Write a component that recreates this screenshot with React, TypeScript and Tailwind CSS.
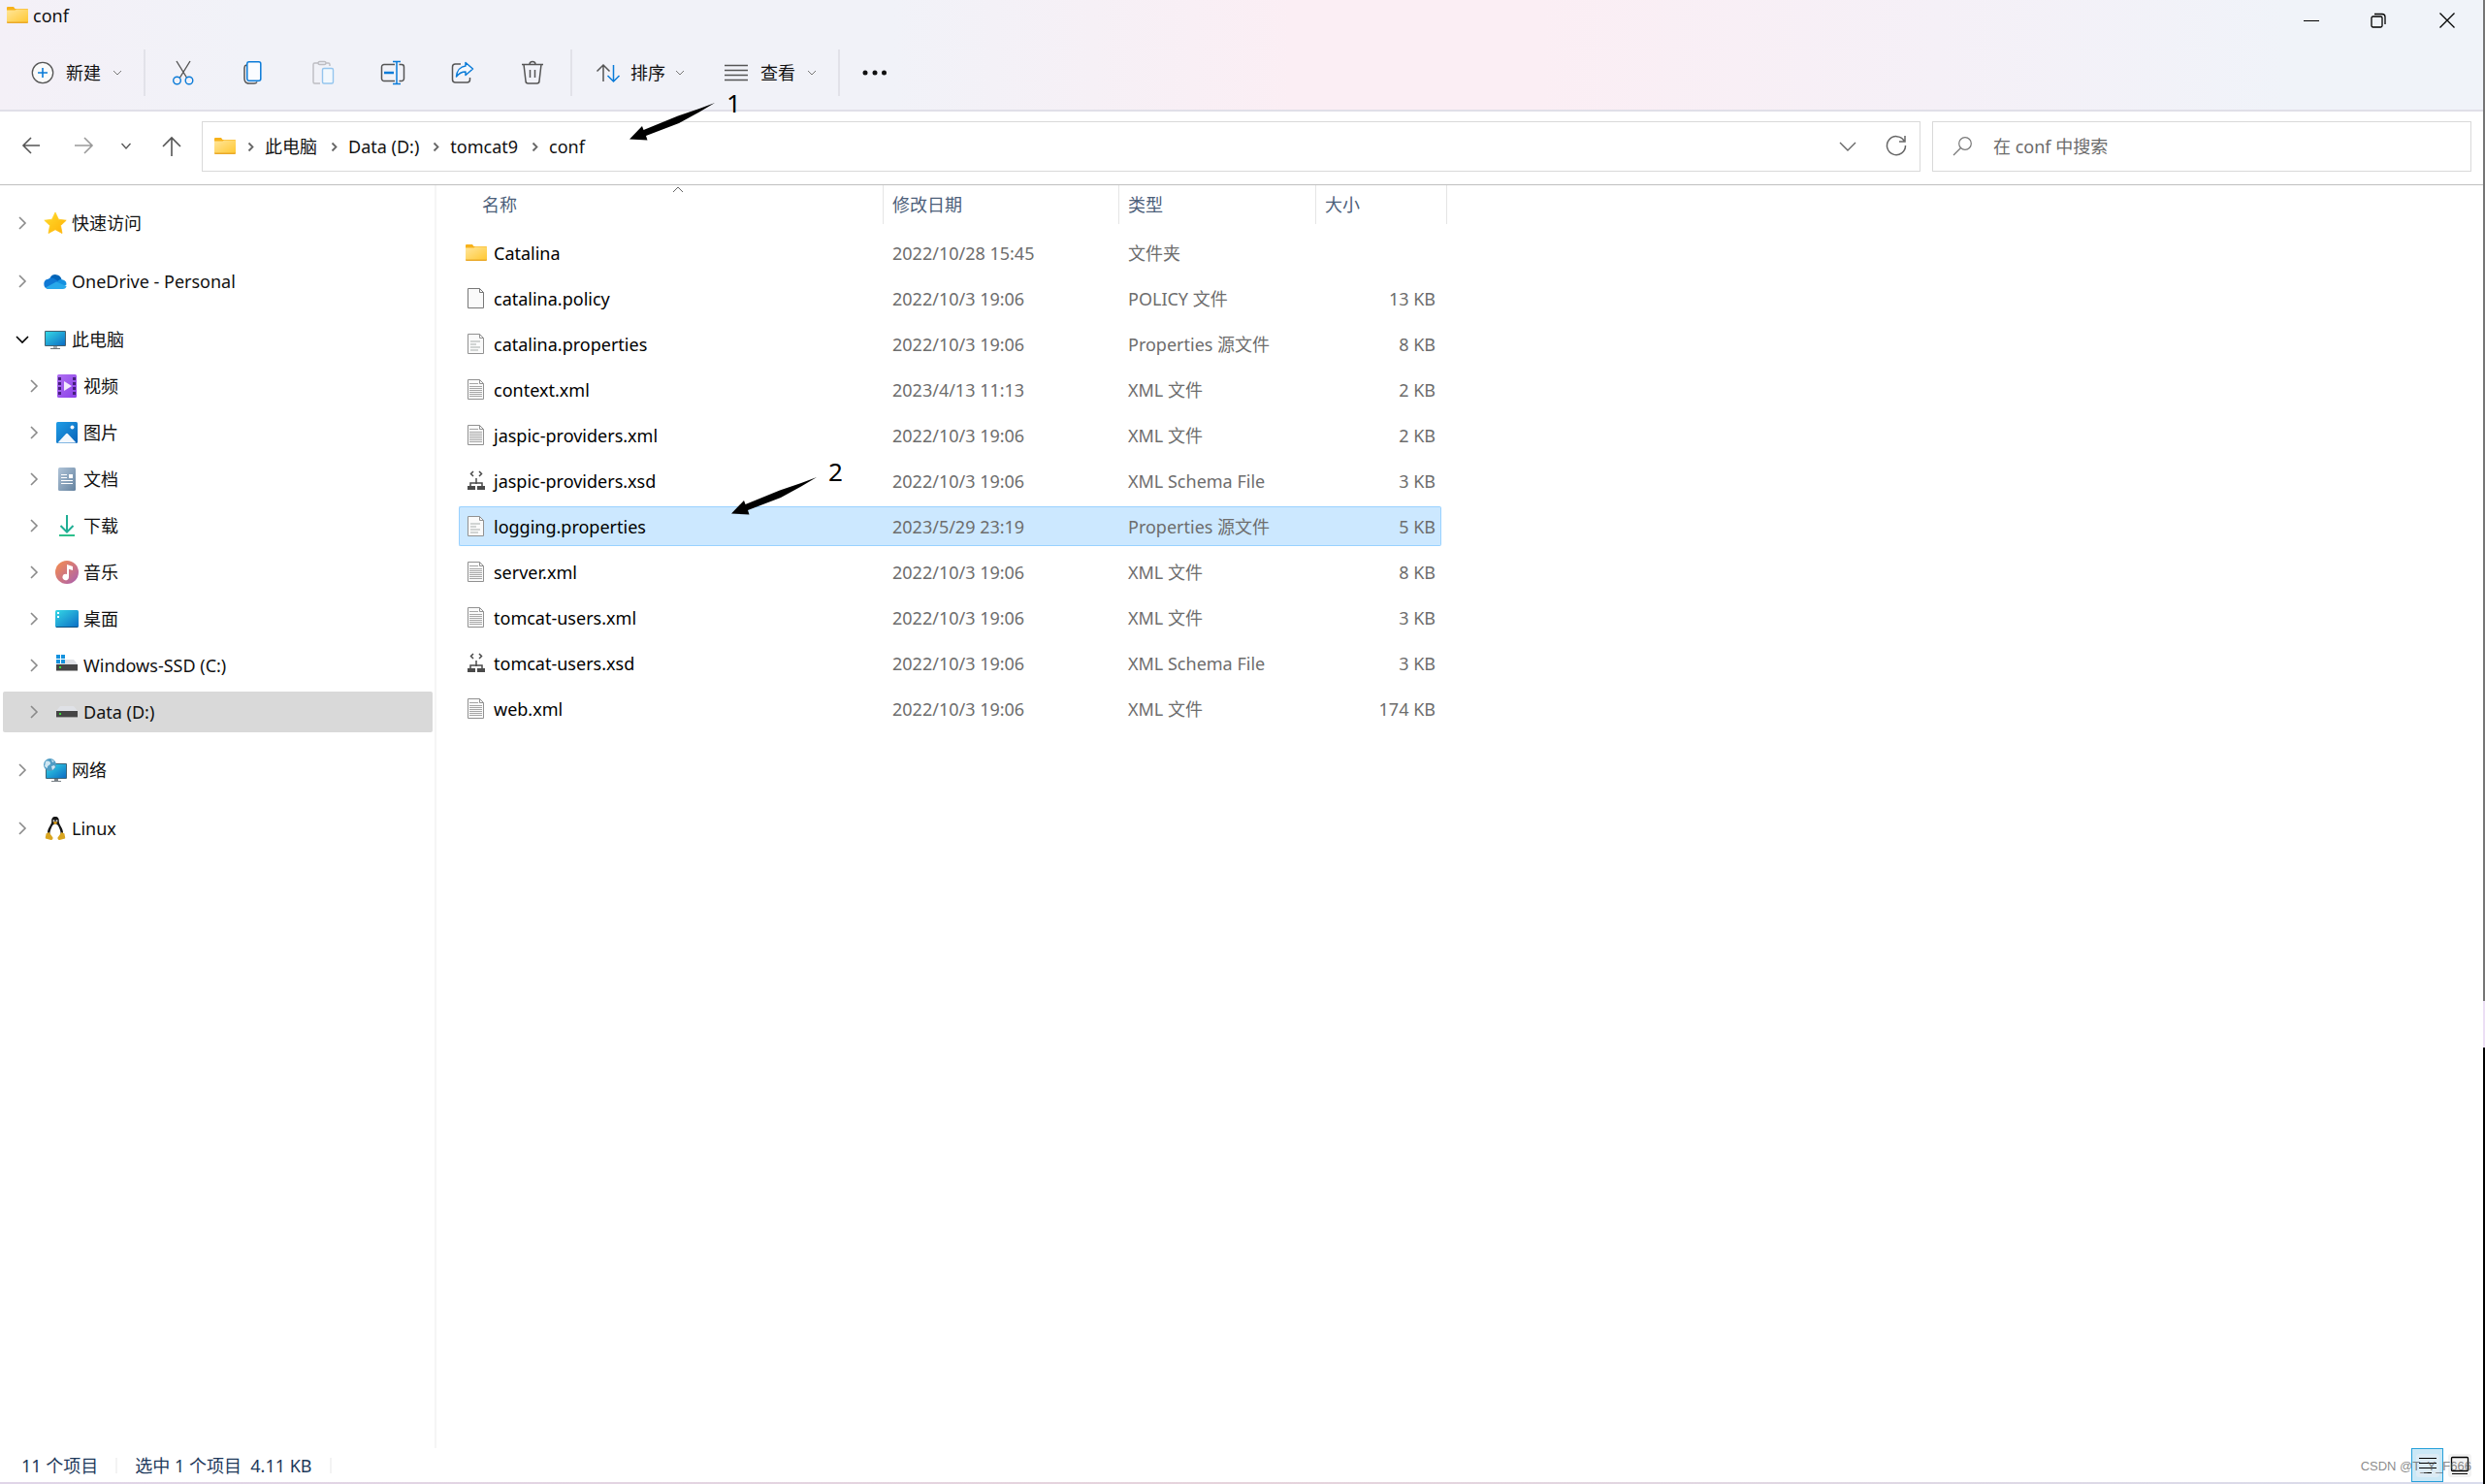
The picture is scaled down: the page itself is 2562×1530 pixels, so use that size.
import { useState } from 'react';
import type { ReactNode } from 'react';

type IconProps = { className?: string };

function Folder({ className = '' }: IconProps) {
  return (
    <svg width="24" height="24" viewBox="0 0 24 24" className={`shrink-0 ${className}`}>
      <defs>
        <linearGradient id="folder" x1="0" y1="0" x2="1" y2="1">
          <stop offset="0" stopColor="#ffe69c" />
          <stop offset="1" stopColor="#ffc832" />
        </linearGradient>
      </defs>
      <path d="M1 4a1 1 0 0 1 1-1h6l1.500 2H22a1 1 0 0 1 1 1v3H1z" fill="#f7b21b" />
      <path d="M1 6.500h8.500L11 5.500h12V19H1z" fill="url(#folder)" />
      <path d="M1 18.500h22v.6a.9.9 0 0 1-.9.9H1.900a.9.9 0 0 1-.9-.9z" fill="#eaa92a" />
    </svg>
  );
}

function Chevron({ className = '' }: IconProps) {
  return (
    <svg width="24" height="24" viewBox="0 0 24 24" fill="none" stroke="currentColor" strokeWidth="1.600" className={`shrink-0 ${className}`}>
      <path d="M9 6l6 6-6 6" />
    </svg>
  );
}

function SmallDown() {
  return (
    <svg width="10" height="10" viewBox="0 0 10 10" fill="none" stroke="#777" strokeWidth="1">
      <path d="M1 3l4 4 4-4" />
    </svg>
  );
}

function CrumbArrow() {
  return (
    <svg width="8" height="12" viewBox="0 0 8 12" fill="none" stroke="#666" strokeWidth="1.800" className="shrink-0">
      <path d="M1.500 2.500l4 4-4 4" />
    </svg>
  );
}

const StarIcon = () => (
  <svg width="24" height="24" viewBox="0 0 24 24">
    <defs>
      <linearGradient id="star" x1="0" y1="0" x2="1" y2="1">
        <stop offset="0" stopColor="#ffdc2e" />
        <stop offset="1" stopColor="#ffb106" />
      </linearGradient>
    </defs>
    <path d="M12 1l3.400 7.200 7.800 1-5.700 5.400 1.500 7.900L12 18.700l-7 3.800 1.500-7.900L.8 9.200l7.800-1z" fill="url(#star)" stroke="url(#star)" strokeLinejoin="round" strokeWidth=".8" />
  </svg>
);

const CloudIcon = () => (
  <svg width="24" height="24" viewBox="0 0 24 24">
    <path d="M6.500 8.500A6.500 6.500 0 0 1 18.500 10l-5 4z" fill="#0364b8" />
    <path d="M5 20a5.200 5.200 0 0 1-.4-10.300A6 6 0 0 1 10.500 9l5.500 3.500L6 20z" fill="#0f78d4" />
    <path d="M11.500 14.500l4.600-4a4.500 4.500 0 0 1 3.900 0 5 5 0 0 1 3.500 5l-4 2z" fill="#1490df" />
    <path d="M2 18.500l11-6 10.600 4.500A4 4 0 0 1 19.500 20H5a5 5 0 0 1-3-1.500z" fill="#28a8ea" />
  </svg>
);

const PcIcon = () => (
  <svg width="24" height="24" viewBox="0 0 24 24">
    <defs>
      <linearGradient id="screen" x1="0" y1="0" x2="1" y2="1">
        <stop offset="0" stopColor="#35d8e6" />
        <stop offset="1" stopColor="#0b6cc4" />
      </linearGradient>
    </defs>
    <rect x="1" y="3" width="22" height="16" rx="1" fill="#46606e" />
    <rect x="2" y="4" width="20" height="14" fill="url(#screen)" />
    <path d="M10 19h4v2h-4z" fill="#a5abb0" />
    <path d="M7 21h10v1H7z" fill="#6c7276" />
  </svg>
);

const VideoIcon = () => (
  <svg width="24" height="24" viewBox="0 0 24 24">
    <defs>
      <linearGradient id="video" x1="0" y1="0" x2="1" y2="1">
        <stop offset="0" stopColor="#b070f2" />
        <stop offset="1" stopColor="#8a3fe8" />
      </linearGradient>
    </defs>
    <rect x="2" y="0" width="20" height="24" rx="1.500" fill="url(#video)" />
    <path d="M3 3h3v3H3zM3 8h3v3H3zM3 13h3v3H3zM3 18h3v3H3zM18 3h3v3h-3zM18 8h3v3h-3zM18 13h3v3h-3zM18 18h3v3h-3z" fill="#46207c" />
    <path d="M9 7l8 5-8 5z" fill="#f2eafc" />
  </svg>
);

const PictureIcon = () => (
  <svg width="24" height="24" viewBox="0 0 24 24">
    <defs>
      <linearGradient id="picture" x1="0" y1="0" x2="1" y2="1">
        <stop offset="0" stopColor="#1f9de6" />
        <stop offset="1" stopColor="#0963b8" />
      </linearGradient>
    </defs>
    <rect x="1" y="1" width="22" height="22" rx="1.500" fill="url(#picture)" />
    <path d="M2.500 22.500l8.300-9a1.600 1.600 0 0 1 2.400 0l8.300 9z" fill="#f3f8fd" />
    <circle cx="17.500" cy="6.500" r="2" fill="#f3f8fd" />
  </svg>
);

const DocIcon = () => (
  <svg width="24" height="24" viewBox="0 0 24 24">
    <defs>
      <linearGradient id="doc" x1="0" y1="0" x2="1" y2="1">
        <stop offset="0" stopColor="#b0c4d8" />
        <stop offset="1" stopColor="#64829f" />
      </linearGradient>
    </defs>
    <rect x="3" y="0" width="18" height="24" rx="1.500" fill="url(#doc)" />
    <path d="M6 7.500h6M6 10.500h6M6 13.500h12M6 16.500h12" stroke="#fff" strokeWidth="1.200" />
    <path d="M14 7h4v4h-4z" fill="#fff" />
  </svg>
);

const DownloadIcon = () => (
  <svg width="24" height="24" viewBox="0 0 24 24" fill="none" strokeWidth="2">
    <path d="M12 1v17M5.500 12l6.500 6.500 6.500-6.500" stroke="#1fae94" />
    <path d="M4 22h16" stroke="#2cc08c" />
  </svg>
);

const MusicIcon = () => (
  <svg width="24" height="24" viewBox="0 0 24 24">
    <defs>
      <linearGradient id="music" x1="0" y1="0" x2="1" y2="1">
        <stop offset="0.100" stopColor="#f08a55" />
        <stop offset="0.900" stopColor="#b063a8" />
      </linearGradient>
    </defs>
    <circle cx="12" cy="12" r="12" fill="url(#music)" />
    <path d="M12 4l6 2v4l-4-1.200V17a3.300 3.300 0 1 1-2-3z" fill="#fff" />
  </svg>
);

const DesktopIcon = () => (
  <svg width="24" height="24" viewBox="0 0 24 24">
    <rect x="0" y="3" width="24" height="18" rx="1.500" fill="url(#screen)" />
    <path d="M1 20h22v1H1z" fill="#0d4f80" />
    <path d="M2 5h2v2H2zM2 9h2v2H2z" fill="#fff" />
  </svg>
);

const DriveIcon = ({ windows = false }: { windows?: boolean }) => (
  <svg width="24" height="24" viewBox="0 0 24 24">
    <path d="M5 6h14l4 5H1z" fill="#dfe1e6" />
    <rect x="1" y="11" width="22" height="7" fill="#454545" />
    <path d="M1 17h22v1H1z" fill="#a0a0a0" />
    <path d="M4 13h2v2H4z" fill="#3adb3a" />
    {windows && (
      <>
        <path d="M1 1h9v9H1z" fill="#fff" />
        <path d="M1 1h4v4H1zM6 1h4v4H6zM1 6h4v4H1zM6 6h4v4H6z" fill="#1492de" />
      </>
    )}
  </svg>
);

const NetworkIcon = () => (
  <svg width="24" height="24" viewBox="0 0 24 24">
    <rect x="2" y="5" width="22" height="16" rx="1" fill="#3b6478" />
    <rect x="3" y="6" width="20" height="14" fill="url(#screen)" />
    <path d="M11 21h4v2h-4zM8 23h10v1H8z" fill="#7b8288" />
    <circle cx="6.500" cy="6.500" r="6.500" fill="#4f9cc4" />
    <path d="M2 3c3-1 5 0 5 2S4 7 4 9 2 9 1 8zM8 8l3-1 1 2-3 3zM8 1l3 2-2 1z" fill="#cfe6f2" />
  </svg>
);

const TuxIcon = () => (
  <svg width="24" height="24" viewBox="0 0 24 24">
    <path d="M12 0c-3 0-4 2-3.800 5 .1 3-3.900 6.500-4.200 11 0 3 2 6 8 6s8.200-3 8-6c-.3-4.500-4.300-8-4.200-11C16 2 15 0 12 0z" fill="#161616" />
    <path d="M12 7.500c-2 0-3 1.500-3.800 3.500C7 14 6 16 6.500 19c.5 2.500 2.500 3.500 5.500 3.500s5-1 5.500-3.500c.5-3-.5-5-1.700-8-.8-2-1.800-3.500-3.800-3.500z" fill="#fff" />
    <circle cx="10.500" cy="4.200" r="1" fill="#ddd" />
    <circle cx="13.500" cy="4.200" r="1" fill="#ddd" />
    <path d="M9.500 6l2.500-1 2.500 1-2.500 2z" fill="#e6a517" />
    <path d="M2.500 17.500l3-1.500 4 5.500c.3 2-1.500 2.800-3 2.300L2 22.500c-.6-1 .4-3 .5-5zM21.500 17.500l-3-1.500-4 5.500c-.3 2 1.500 2.800 3 2.300l4.500-1.300c.6-1-.4-3-.5-5z" fill="#d9a520" />
  </svg>
);

type FileKind = 'folder' | 'blank' | 'props' | 'text' | 'schema';

function FileIcon({ kind }: { kind: FileKind }) {
  if (kind === 'folder') return <Folder />;
  if (kind === 'schema') {
    return (
      <svg width="24" height="24" viewBox="0 0 24 24" fill="none" stroke="#4a4a4a" className="shrink-0">
        <path d="M9 2L6.500 4.500 9 7M15 2l2.500 2.500L15 7" strokeWidth="1.500" />
        <path d="M12 9v6M6 18v-4h12v4" strokeWidth="1.500" />
        <path d="M3 17h8v4H3zM13 17h8v4h-8z" fill="#4a4a4a" stroke="none" />
      </svg>
    );
  }
  const edge = kind === 'blank' ? '#777' : '#919191';
  return (
    <svg width="24" height="24" viewBox="0 0 24 24" fill="none" className="shrink-0">
      <path d="M3.500 1.500h12l4 4v16h-16z" fill="#fafafa" stroke={edge} />
      <path d="M15.500 1.500v4h4" stroke={edge} />
      {kind === 'text' && <path d="M5 5.500h9M5 8.500h13M5 10.500h13M5 12.500h13M5 14.500h13M5 16.500h13M5 18.500h13" stroke="#a6a6a6" />}
      {kind === 'props' && <path d="M6 9h10M6 12h6M6 15h10M6 18h8" stroke="#c3c8c6" strokeWidth="1.500" />}
    </svg>
  );
}

const CutIcon = () => (
  <svg width="24" height="26" viewBox="0 0 24 26" fill="none" strokeWidth="1.400">
    <path d="M5 1l10.500 17M19 1L8.500 18" stroke="#555" />
    <circle cx="5.500" cy="21" r="3.800" stroke="#0a7bd8" />
    <circle cx="18" cy="21" r="3.800" stroke="#0a7bd8" />
  </svg>
);

const CopyIcon = () => (
  <svg width="22" height="26" viewBox="0 0 22 26" fill="none" strokeWidth="1.500">
    <path d="M4 5c-1.500.5-2 1.500-2 3v11c0 3 2 5 5 5h5c1.500 0 2.500-.5 3-1.500" stroke="#555" />
    <rect x="4.800" y="1.800" width="14" height="19.500" rx="2" fill="#fafcff" stroke="#0a7bd8" />
  </svg>
);

const PasteIcon = () => (
  <svg width="24" height="26" viewBox="0 0 24 26" fill="none" strokeWidth="1.400">
    <path d="M7 3H3.500A1.500 1.500 0 0 0 2 4.500v18A1.500 1.500 0 0 0 3.500 24H9M15 3h2.500A1.500 1.500 0 0 1 19 4.500V6" stroke="#bdbdc2" />
    <rect x="7" y="1.500" width="8" height="3" rx="1.500" stroke="#bdbdc2" />
    <rect x="11.500" y="8.500" width="11" height="15.500" rx="1.500" fill="#f2f8fd" stroke="#94c5ee" />
  </svg>
);

const RenameIcon = () => (
  <svg width="26" height="26" viewBox="0 0 26 26" fill="none" strokeWidth="1.500">
    <path d="M15 4.500H4A2.500 2.500 0 0 0 1.500 7v12A2.500 2.500 0 0 0 4 21.500h11M19.500 4.500h2.500a2.500 2.500 0 0 1 2.500 2.500v12a2.500 2.500 0 0 1-2.500 2.500h-2.500" stroke="#555" />
    <path d="M13 1.500h8M17 1.500v23M13 24.500h8" stroke="#0a7bd8" />
    <path d="M4 13h10" stroke="#0a7bd8" strokeWidth="2.500" />
  </svg>
);

const ShareIcon = () => (
  <svg width="24" height="26" viewBox="0 0 24 26" fill="none" strokeWidth="1.500">
    <path d="M10 4H4.500A3 3 0 0 0 1.500 7v13a3 3 0 0 0 3 3h12a3 3 0 0 0 3-3v-2" stroke="#555" />
    <path d="M15 2.500l7.500 6.500-7.500 6.500V12c-4 0-6.500 1-9.500 5 .5-6 4-10.500 9.500-11z" fill="#f4f8fd" stroke="#0a7bd8" strokeLinejoin="round" />
  </svg>
);

const TrashIcon = () => (
  <svg width="24" height="26" viewBox="0 0 24 26" fill="none" stroke="#555" strokeWidth="1.500">
    <path d="M1 4.500h22M9 4.500a3 3 0 0 1 6 0M3 4.500l2 17A2.500 2.500 0 0 0 7.500 24h9a2.500 2.500 0 0 0 2.500-2.500l2-17M9.500 10v8M14.500 10v8" />
  </svg>
);

const SortIcon = () => (
  <svg width="26" height="24" viewBox="0 0 26 24" fill="none" strokeWidth="1.500">
    <path d="M8 21V4M1.500 10.500L8 4l6.500 6.500" stroke="#555" />
    <path d="M18.500 4v17M12.500 15l6 6 6-6" stroke="#0a7bd8" />
  </svg>
);

const ViewIcon = () => (
  <svg width="26" height="24" viewBox="0 0 26 24" stroke="#555" strokeWidth="1.300">
    <path d="M1 4.500h24M1 9.500h24M1 14.500h24M1 19.500h24" />
  </svg>
);

const TREE: { label: string; icon: ReactNode; child?: boolean; open?: boolean; last?: boolean }[] = [
  { label: '快速访问', icon: <StarIcon />, last: true },
  { label: 'OneDrive - Personal', icon: <CloudIcon />, last: true },
  { label: '此电脑', icon: <PcIcon />, open: true },
  { label: '视频', icon: <VideoIcon />, child: true },
  { label: '图片', icon: <PictureIcon />, child: true },
  { label: '文档', icon: <DocIcon />, child: true },
  { label: '下载', icon: <DownloadIcon />, child: true },
  { label: '音乐', icon: <MusicIcon />, child: true },
  { label: '桌面', icon: <DesktopIcon />, child: true },
  { label: 'Windows-SSD (C:)', icon: <DriveIcon windows />, child: true },
  { label: 'Data (D:)', icon: <DriveIcon />, child: true, last: true },
  { label: '网络', icon: <NetworkIcon />, last: true },
  { label: 'Linux', icon: <TuxIcon />, last: true },
];

const FILES: { name: string; date: string; type: string; size: string; kind: FileKind }[] = [
  { name: 'Catalina', date: '2022/10/28 15:45', type: '文件夹', size: '', kind: 'folder' },
  { name: 'catalina.policy', date: '2022/10/3 19:06', type: 'POLICY 文件', size: '13 KB', kind: 'blank' },
  { name: 'catalina.properties', date: '2022/10/3 19:06', type: 'Properties 源文件', size: '8 KB', kind: 'props' },
  { name: 'context.xml', date: '2023/4/13 11:13', type: 'XML 文件', size: '2 KB', kind: 'text' },
  { name: 'jaspic-providers.xml', date: '2022/10/3 19:06', type: 'XML 文件', size: '2 KB', kind: 'text' },
  { name: 'jaspic-providers.xsd', date: '2022/10/3 19:06', type: 'XML Schema File', size: '3 KB', kind: 'schema' },
  { name: 'logging.properties', date: '2023/5/29 23:19', type: 'Properties 源文件', size: '5 KB', kind: 'props' },
  { name: 'server.xml', date: '2022/10/3 19:06', type: 'XML 文件', size: '8 KB', kind: 'text' },
  { name: 'tomcat-users.xml', date: '2022/10/3 19:06', type: 'XML 文件', size: '3 KB', kind: 'text' },
  { name: 'tomcat-users.xsd', date: '2022/10/3 19:06', type: 'XML Schema File', size: '3 KB', kind: 'schema' },
  { name: 'web.xml', date: '2022/10/3 19:06', type: 'XML 文件', size: '174 KB', kind: 'text' },
];

const CRUMBS = ['此电脑', 'Data (D:)', 'tomcat9', 'conf'];
const COLUMNS = ['修改日期', '类型', '大小'];

// numbered arrow drawn over the window
function Note({ n, className, arrow }: { n: number; className: string; arrow: string }) {
  return (
    <div className={`pointer-events-none absolute flex items-start ${className}`}>
      <svg width="88" height="40" viewBox="0 0 88 40" className={arrow}>
        <path d="M0 37.500L13 24l1.500 4L50 13.500 72 6 88 0 72 9.500 51 21 17 34l1.500 4.500z" fill="#000" />
      </svg>
      <span className="ml-3 text-[26px] leading-7 text-black">{n}</span>
    </div>
  );
}

export default function App() {
  const [folder, setFolder] = useState('Data (D:)');
  const [selected, setSelected] = useState('logging.properties');
  const [query, setQuery] = useState('');

  return (
    <div className="relative flex min-h-screen bg-white font-['Noto_Sans','Noto_Sans_CJK_SC',sans-serif] text-[18px] leading-6 text-[#111]">
      <div className="flex grow flex-col">
        <header className="border-b-2 border-[#e0dfe8] bg-[linear-gradient(90deg,#f4f0f7_0%,#f1f2f8_10%,#f1f2f8_36%,#fbeef4_52%,#fbeef4_62%,#f5f0f7_78%,#f0f3f9_92%)]">
          <div className="flex h-11 items-start justify-between">
            <h1 className="flex items-center gap-1 pt-1 pl-1.5">
              <Folder />
              conf
            </h1>
            <div className="flex">
              <button aria-label="最小化" className="flex h-[42px] w-[70px] items-center justify-center">
                <svg width="16" height="16" viewBox="0 0 16 16" stroke="#000"><path d="M0 8.500h16" /></svg>
              </button>
              <button aria-label="还原" className="flex h-[42px] w-[68px] items-center justify-center">
                <svg width="16" height="16" viewBox="0 0 16 16" fill="none" stroke="#000" strokeWidth="1.300">
                  <rect x="1" y="4" width="11" height="11" rx="1.500" />
                  <path d="M4 1.500h8a3 3 0 0 1 3 3V12" />
                </svg>
              </button>
              <button aria-label="关闭" className="flex h-[42px] w-[74px] items-center justify-center">
                <svg width="16" height="16" viewBox="0 0 16 16" stroke="#000" strokeWidth="1.300"><path d="M.5.5l15 15M15.500.5l-15 15" /></svg>
              </button>
            </div>
          </div>
          <div className="flex h-[69px] items-start pt-[7px]">
            <button className="flex h-12 items-center gap-3 pr-[22px] pl-8">
              <svg width="24" height="24" viewBox="0 0 24 24" fill="none" strokeWidth="1.300">
                <circle cx="12" cy="12" r="10.700" fill="#fafafa" stroke="#555" />
                <path d="M12 7v10M7 12h10" stroke="#0a7bd8" strokeWidth="1.600" />
              </svg>
              新建
              <SmallDown />
            </button>
            <span className="h-12 w-0.5 bg-[#e2e2e9]" />
            <div className="flex px-[3px]">
              <button aria-label="剪切" className="flex h-12 w-[72px] items-center justify-center"><CutIcon /></button>
              <button aria-label="复制" className="flex h-12 w-[72px] items-center justify-center"><CopyIcon /></button>
              <button aria-label="粘贴" className="flex h-12 w-[72px] items-center justify-center"><PasteIcon /></button>
              <button aria-label="重命名" className="flex h-12 w-[72px] items-center justify-center"><RenameIcon /></button>
              <button aria-label="共享" className="flex h-12 w-[72px] items-center justify-center"><ShareIcon /></button>
              <button aria-label="删除" className="flex h-12 w-[72px] items-center justify-center"><TrashIcon /></button>
            </div>
            <span className="h-12 w-0.5 bg-[#e2e2e9]" />
            <button className="flex h-12 items-center gap-2.5 pr-6 pl-6"><SortIcon />排序<SmallDown /></button>
            <button className="flex h-12 items-center gap-3 pr-[22px] pl-4"><ViewIcon />查看<SmallDown /></button>
            <span className="h-12 w-0.5 bg-[#e2e2e9]" />
            <button aria-label="更多" className="flex h-12 w-[72px] items-center justify-center">
              <svg width="26" height="6" viewBox="0 0 26 6" fill="#111">
                <circle cx="3" cy="3" r="2.500" />
                <circle cx="13" cy="3" r="2.500" />
                <circle cx="22.500" cy="3" r="2.500" />
              </svg>
            </button>
          </div>
        </header>

        <nav className="flex h-[76px] items-start border-b border-[#bfbfbf] pt-2.5 pr-3 pl-5">
          <button aria-label="后退" className="flex h-[52px] w-[54px] items-center">
            <svg width="24" height="24" viewBox="0 0 24 24" fill="none" stroke="#555" strokeWidth="1.600"><path d="M21 11H4M12 3l-8 8 8 8" /></svg>
          </button>
          <button aria-label="前进" className="flex h-[52px] w-[50px] items-center">
            <svg width="24" height="24" viewBox="0 0 24 24" fill="none" stroke="#999" strokeWidth="1.600"><path d="M3 11h17M13 3l8 8-8 8" /></svg>
          </button>
          <button aria-label="最近" className="flex h-[52px] w-[42px] items-center">
            <svg width="12" height="12" viewBox="0 0 12 12" fill="none" stroke="#555" strokeWidth="1.300"><path d="M1.500 3l4.500 5 4.500-5" /></svg>
          </button>
          <button aria-label="上移" className="flex h-[52px] w-[42px] items-center">
            <svg width="24" height="24" viewBox="0 0 24 24" fill="none" stroke="#555" strokeWidth="1.600"><path d="M11 22V4M2 12l9-9 9 9" /></svg>
          </button>
          <div className="flex h-[52px] grow items-center border border-[#d9d9d9] pl-[11px]">
            <Folder />
            {CRUMBS.map(c => (
              <span key={c} className="flex items-center pr-[3px]">
                <span className="flex w-[29px] justify-center"><CrumbArrow /></span>
                <a href="#">{c}</a>
              </span>
            ))}
            <button aria-label="历史" className="ml-auto w-12">
              <svg width="20" height="20" viewBox="0 0 20 20" fill="none" stroke="#666" strokeWidth="1.400"><path d="M2 6l8 8 8-8" /></svg>
            </button>
            <button aria-label="刷新" className="w-9">
              <svg width="24" height="24" viewBox="0 0 24 24" fill="none" stroke="#666" strokeWidth="1.500"><path d="M20 6a9.500 9.500 0 1 0 1.500 5M21 1v6h-6" /></svg>
            </button>
          </div>
          <label className="ml-3 flex h-[52px] w-[556px] items-center gap-5 border border-[#d9d9d9] pl-5">
            <svg width="22" height="22" viewBox="0 0 22 22" fill="none" stroke="#777" strokeWidth="1.200">
              <circle cx="13" cy="8" r="6.300" />
              <path d="M8.500 12.500L1 20" />
            </svg>
            <input value={query} onChange={e => setQuery(e.target.value)} placeholder="在 conf 中搜索" className="grow outline-none placeholder:text-[#6b6b6b]" />
          </label>
        </nav>

        <div className="flex grow">
          <aside className="w-[450px] shrink-0 border-r-2 border-[#f5f5f5] pt-[18px] pr-0.5 pl-[3px]">
            {TREE.map(t => (
              <button key={t.label} onClick={() => setFolder(t.label)}
                className={`flex h-[42px] w-full items-center rounded-xs text-left ${t.child ? 'pl-5' : 'pl-2'} ${t.last ? 'mb-[18px]' : 'mb-1.5'} ${folder === t.label ? 'bg-[#d9d9d9]' : ''}`}>
                <Chevron className={t.open ? 'rotate-90 text-black' : 'text-[#8a8a8a]'} />
                <span className="mr-[5px] ml-2.5">{t.icon}</span>
                {t.label}
              </button>
            ))}
          </aside>

          <main className="grow pl-[23px]">
            <table className="w-[1019px] table-fixed border-separate border-spacing-0 text-[#6d6d6d]">
              <colgroup>
                <col className="w-[438px]" />
                <col className="w-[243px]" />
                <col className="w-[203px]" />
                <col className="w-[135px]" />
              </colgroup>
              <thead className="text-left text-[#4c607a]">
                <tr className="h-[46px]">
                  <th className="p-0 align-top font-normal">
                    <div className="relative flex h-10 items-center border-r border-[#e5e5e5] pl-6">
                      名称
                      <svg width="12" height="7" viewBox="0 0 12 7" fill="none" stroke="#666" className="absolute top-px left-[220px]"><path d="M1 6l5-5 5 5" /></svg>
                    </div>
                  </th>
                  {COLUMNS.map(c => (
                    <th key={c} className="p-0 align-top font-normal">
                      <div className="flex h-10 items-center border-r border-[#e5e5e5] pl-[9px]">{c}</div>
                    </th>
                  ))}
                </tr>
              </thead>
              <tbody>
                {FILES.map(f => {
                  const cls = f.name === selected ? 'border-[#99d1ff] bg-[#cce8ff]' : 'border-transparent';
                  return (
                    <tr key={f.name} className="h-[47px]" onClick={() => setSelected(f.name)}>
                      <td className="p-0">
                        <div className={`flex h-[41px] items-center gap-1.5 rounded-l-xs border-y border-l pl-[5px] text-black ${cls}`}>
                          <FileIcon kind={f.kind} />
                          {f.name}
                        </div>
                      </td>
                      <td className="p-0"><div className={`flex h-[41px] items-center border-y pl-[9px] ${cls}`}>{f.date}</div></td>
                      <td className="p-0"><div className={`flex h-[41px] items-center border-y pl-[9px] ${cls}`}>{f.type}</div></td>
                      <td className="p-0">
                        <div className={`mr-1.5 flex h-[41px] items-center justify-end rounded-r-xs border-y border-r pr-[5px] ${cls}`}>{f.size}</div>
                      </td>
                    </tr>
                  );
                })}
              </tbody>
            </table>
          </main>
        </div>

        <footer className="relative flex h-[35px] items-center text-[#1e395b]">
          <span className="pl-[22px]">11 个项目</span>
          <span className="mx-[18px] h-4 w-0.5 bg-[#f3f3f3]" />
          <span className="whitespace-pre">选中 1 个项目  4.11 KB</span>
          <span className="mx-[18px] h-4 w-0.5 bg-[#f3f3f3]" />
          <button aria-label="详细信息" className="ml-auto flex h-[35px] w-[33px] items-center justify-center border border-[#26a0da] bg-[#cbe8f6]">
            <svg width="24" height="24" viewBox="0 0 24 24" stroke="#000">
              <rect width="24" height="24" rx="3" fill="#dcebf5" stroke="none" />
              <path d="M3 4.500h18M3 9.500h18M3 14.500h18M8 19.500h8" />
            </svg>
          </button>
          <button aria-label="大图标" className="mr-3 ml-[5px]">
            <svg width="24" height="24" viewBox="0 0 24 24" fill="none" stroke="#000">
              <rect width="24" height="24" rx="3" fill="#f3f3f3" stroke="none" />
              <rect x="3.500" y="3.500" width="17" height="14" rx="1" strokeWidth="1.300" />
              <path d="M4 20.500h16" />
            </svg>
          </button>
          <span className="pointer-events-none absolute right-3 bottom-1 font-['Liberation_Sans',sans-serif] text-[13px] text-[#555]/70">CSDN @T_Y_F666</span>
        </footer>
        <div className="h-0.5 bg-linear-to-r from-[#e0d5e8] via-[#e6d3dc] to-[#d9dcec]" />
      </div>

      {/* sliver of the desktop behind the window */}
      <div className="flex w-0.5 shrink-0 flex-col bg-black">
        <span className="h-[1032px] bg-[#757575]" />
        <span className="h-12 bg-[#ecdff5]" />
      </div>

      <Note n={1} className="top-[92px] left-[649px]" arrow="mt-3.5" />
      <Note n={2} className="top-[472px] left-[754px]" arrow="mt-5" />
    </div>
  );
}
